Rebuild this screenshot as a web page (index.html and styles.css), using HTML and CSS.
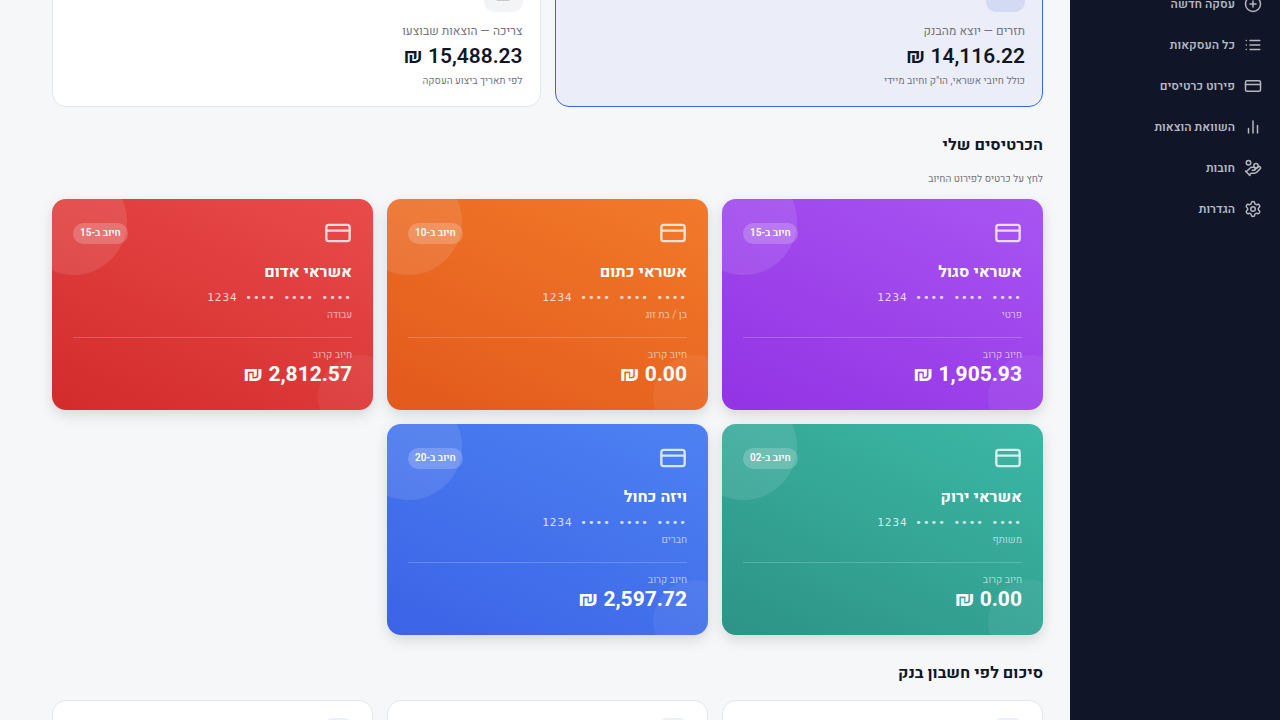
FILE: index.html
```html
<!DOCTYPE html>
<html lang="he" dir="rtl">
<head>
    <meta charset="UTF-8">
    <meta name="viewport" content="width=device-width, initial-scale=1.0">
    <title>הכרטיסים שלי</title>
    <link rel="stylesheet" href="styles.css">
</head>
<body>
    <svg class="sprite" aria-hidden="true">
        <symbol id="icon-card" viewBox="0 0 24 24">
            <rect x="2" y="5" width="20" height="14" rx="2"/>
            <path d="M2 10h20"/>
        </symbol>
    </svg>

    <div class="app">
        <aside class="sidebar">
            <nav class="nav">
                <a href="#new">
                    <svg class="icon" viewBox="0 0 24 24"><circle cx="12" cy="12" r="10"/><path d="M8 12h8M12 8v8"/></svg>
                    עסקה חדשה
                </a>
                <a href="#all">
                    <svg class="icon" viewBox="0 0 24 24"><path d="M8 6h13M8 12h13M8 18h13M3 6h.01M3 12h.01M3 18h.01"/></svg>
                    כל העסקאות
                </a>
                <a href="#cards">
                    <svg class="icon"><use href="#icon-card"/></svg>
                    פירוט כרטיסים
                </a>
                <a href="#compare">
                    <svg class="icon" viewBox="0 0 24 24"><path d="M18 20V10M12 20V4M6 20v-6"/></svg>
                    השוואת הוצאות
                </a>
                <a href="#debts">
                    <svg class="icon" viewBox="0 0 24 24"><path d="M11 15h2a2 2 0 1 0 0-4h-3c-.6 0-1.1.2-1.4.6L3 17"/><path d="m7 21 1.6-1.4c.3-.4.8-.6 1.4-.6h4c1.1 0 2.1-.4 2.8-1.2l4.6-4.4a2 2 0 0 0-2.75-2.91l-4.2 3.9"/><path d="m2 16 6 6"/><circle cx="16" cy="9" r="2.9"/><circle cx="6" cy="5" r="3"/></svg>
                    חובות
                </a>
                <a href="#settings">
                    <svg class="icon" viewBox="0 0 24 24"><path d="M9.671 4.136a2.34 2.34 0 0 1 4.659 0 2.34 2.34 0 0 0 3.319 1.915 2.34 2.34 0 0 1 2.33 4.033 2.34 2.34 0 0 0 0 3.831 2.34 2.34 0 0 1-2.33 4.033 2.34 2.34 0 0 0-3.319 1.915 2.34 2.34 0 0 1-4.659 0 2.34 2.34 0 0 0-3.32-1.915 2.34 2.34 0 0 1-2.33-4.033 2.34 2.34 0 0 0 0-3.831A2.34 2.34 0 0 1 6.35 6.051a2.34 2.34 0 0 0 3.319-1.915"/><circle cx="12" cy="12" r="3"/></svg>
                    הגדרות
                </a>
            </nav>
        </aside>

        <main class="main">
            <section class="stats">
                <div class="stat active">
                    <div class="stat-icon"></div>
                    <div class="stat-label">תזרים — יוצא מהבנק</div>
                    <div class="stat-value">14,116.22 ₪</div>
                    <div class="stat-note">כולל חיובי אשראי, הו"ק וחיוב מיידי</div>
                </div>
                <div class="stat">
                    <div class="stat-icon">
                        <svg class="icon" viewBox="0 0 24 24"><path d="M5 2h14v19H5zM9 7h6M9 12h6M5 20h14"/></svg>
                    </div>
                    <div class="stat-label">צריכה — הוצאות שבוצעו</div>
                    <div class="stat-value">15,488.23 ₪</div>
                    <div class="stat-note">לפי תאריך ביצוע העסקה</div>
                </div>
            </section>

            <h2>הכרטיסים שלי</h2>
            <p class="hint">לחץ על כרטיס לפירוט החיוב</p>

            <section class="cards">
                <a class="card purple" href="#card-1">
                    <div class="card-top">
                        <svg class="icon"><use href="#icon-card"/></svg>
                        <span class="badge">חיוב ב-15</span>
                    </div>
                    <div class="card-name">אשראי סגול</div>
                    <div class="card-number">•••• •••• •••• 1234</div>
                    <div class="card-owner">פרטי</div>
                    <div class="card-bottom">
                        <div class="card-label">חיוב קרוב</div>
                        <div class="card-amount">1,905.93 ₪</div>
                    </div>
                </a>
                <a class="card orange" href="#card-2">
                    <div class="card-top">
                        <svg class="icon"><use href="#icon-card"/></svg>
                        <span class="badge">חיוב ב-10</span>
                    </div>
                    <div class="card-name">אשראי כתום</div>
                    <div class="card-number">•••• •••• •••• 1234</div>
                    <div class="card-owner">בן / בת זוג</div>
                    <div class="card-bottom">
                        <div class="card-label">חיוב קרוב</div>
                        <div class="card-amount">0.00 ₪</div>
                    </div>
                </a>
                <a class="card red" href="#card-3">
                    <div class="card-top">
                        <svg class="icon"><use href="#icon-card"/></svg>
                        <span class="badge">חיוב ב-15</span>
                    </div>
                    <div class="card-name">אשראי אדום</div>
                    <div class="card-number">•••• •••• •••• 1234</div>
                    <div class="card-owner">עבודה</div>
                    <div class="card-bottom">
                        <div class="card-label">חיוב קרוב</div>
                        <div class="card-amount">2,812.57 ₪</div>
                    </div>
                </a>
                <a class="card green" href="#card-4">
                    <div class="card-top">
                        <svg class="icon"><use href="#icon-card"/></svg>
                        <span class="badge">חיוב ב-02</span>
                    </div>
                    <div class="card-name">אשראי ירוק</div>
                    <div class="card-number">•••• •••• •••• 1234</div>
                    <div class="card-owner">משותף</div>
                    <div class="card-bottom">
                        <div class="card-label">חיוב קרוב</div>
                        <div class="card-amount">0.00 ₪</div>
                    </div>
                </a>
                <a class="card blue" href="#card-5">
                    <div class="card-top">
                        <svg class="icon"><use href="#icon-card"/></svg>
                        <span class="badge">חיוב ב-20</span>
                    </div>
                    <div class="card-name">ויזה כחול</div>
                    <div class="card-number">•••• •••• •••• 1234</div>
                    <div class="card-owner">חברים</div>
                    <div class="card-bottom">
                        <div class="card-label">חיוב קרוב</div>
                        <div class="card-amount">2,597.72 ₪</div>
                    </div>
                </a>
            </section>

            <h2>סיכום לפי חשבון בנק</h2>
            <section class="banks">
                <div class="bank"><div class="bank-icon"></div></div>
                <div class="bank"><div class="bank-icon"></div></div>
                <div class="bank"><div class="bank-icon"></div></div>
            </section>
        </main>
    </div>
</body>
</html>
```
FILE: styles.css
```css
* {
    box-sizing: border-box;
}
body {
    margin: 0;
    font-family: Heebo, Roboto, "Open Sans", sans-serif;
    color: #111528;
    background: #f5f7f9;
}
a {
    color: inherit;
    text-decoration: none;
}
h2 {
    margin: 0;
    font-size: 16px;
    line-height: 24px;
    font-weight: 700;
}
.sprite {
    display: none;
}
.icon {
    width: 18px;
    height: 18px;
    flex-shrink: 0;
    fill: none;
    stroke: currentColor;
    stroke-width: 2;
    stroke-linecap: round;
    stroke-linejoin: round;
}
.app {
    display: flex;
    height: 100vh;
    overflow: hidden;
}

/* sidebar */
.sidebar {
    width: 210px;
    flex-shrink: 0;
    background: #111528;
}
.nav {
    display: flex;
    flex-direction: column;
    margin-top: -17px;
}
.nav a {
    display: flex;
    align-items: center;
    gap: 9px;
    height: 41px;
    padding: 0 18px;
    font-size: 12px;
    font-weight: 600;
    color: #b4b7c0;
}

/* main */
.main {
    flex: 1;
    padding: 0 27px 0 52px;
}
.stats {
    display: grid;
    grid-template-columns: 1fr 1fr;
    gap: 14px;
    margin: -46px 0 26px;
}
.stat {
    padding: 17px 17px 16px;
    background: #fff;
    border: 1px solid #e3e6ea;
    border-radius: 14px;
}
.stat.active {
    background: #ebeef8;
    border-color: #3b63e6;
}
.stat-icon {
    display: flex;
    align-items: center;
    justify-content: center;
    width: 39px;
    height: 40px;
    margin-bottom: 9px;
    border-radius: 10px;
    background: #f3f4f6;
}
.stat-icon .icon {
    width: 20px;
    height: 22px;
    color: #4a4d60;
}
.stat.active .stat-icon {
    background: #d3daf4;
}
.stat-label {
    font-size: 12px;
    line-height: 20px;
    color: #71747f;
}
.stat-value {
    margin-top: 1px;
    font-size: 21px;
    line-height: 30px;
    font-weight: 600;
}
.stat-note {
    font-size: 10px;
    line-height: 18px;
    color: #71747f;
}
.hint {
    margin: 14px 0 12px;
    font-size: 10px;
    line-height: 16px;
    color: #71747f;
}

/* credit cards */
.cards {
    display: grid;
    grid-template-columns: repeat(3, 1fr);
    gap: 14px;
    margin-bottom: 26px;
}
.card {
    position: relative;
    padding: 20px 21px 22px;
    overflow: hidden;
    border-radius: 14px;
    color: #fff;
    box-shadow: 0 5px 14px rgba(0, 0, 0, 0.13);
}
.card::before,
.card::after {
    content: "";
    position: absolute;
    border-radius: 50%;
}
.card::before {
    top: -31px;
    left: -32px;
    width: 107px;
    height: 107px;
    background: rgba(255, 255, 255, 0.1);
}
.card::after {
    right: -29px;
    bottom: -29px;
    width: 84px;
    height: 84px;
    background: rgba(255, 255, 255, 0.06);
}
.purple {
    background: linear-gradient(25deg, #9333e4, #a855f2);
}
.orange {
    background: linear-gradient(25deg, #e2591c, #f27a2a);
}
.red {
    background: linear-gradient(25deg, #d32b2b, #e94b4b);
}
.green {
    background: linear-gradient(25deg, #2d9386, #3cb8a6);
}
.blue {
    background: linear-gradient(25deg, #3b63e6, #4d82f2);
}
.card-top {
    display: flex;
    align-items: center;
    justify-content: space-between;
    margin-bottom: 15px;
}
.card-top .icon {
    width: 28px;
    height: 28px;
    opacity: 0.8;
}
.badge {
    position: relative;
    z-index: 1;
    padding: 0 7px;
    border-radius: 11px;
    background: rgba(255, 255, 255, 0.2);
    font-size: 10px;
    line-height: 21px;
    font-weight: 600;
}
.card-name {
    font-size: 16px;
    line-height: 20px;
    font-weight: 700;
}
.card-number {
    margin-top: 8px;
    font-family: "DejaVu Sans Mono", monospace;
    font-size: 11px;
    line-height: 16px;
    letter-spacing: 1px;
    color: rgba(255, 255, 255, 0.8);
}
.card-owner,
.card-label {
    font-size: 10px;
    line-height: 14px;
    color: rgba(255, 255, 255, 0.6);
}
.card-owner {
    margin-top: 2px;
}
.card-bottom {
    margin-top: 15px;
    padding-top: 10px;
    border-top: 1px solid rgba(255, 255, 255, 0.2);
}
.card-amount {
    font-size: 21px;
    line-height: 26px;
    font-weight: 700;
}

/* bank accounts */
.banks {
    display: grid;
    grid-template-columns: repeat(3, 1fr);
    gap: 14px;
    margin-top: 15px;
}
.bank {
    min-height: 120px;
    padding: 17px 20px;
    background: #fff;
    border: 1px solid #e3e6ea;
    border-radius: 14px;
}
.bank-icon {
    width: 28px;
    height: 28px;
    border-radius: 8px;
    background: #ebeffc;
}
```
